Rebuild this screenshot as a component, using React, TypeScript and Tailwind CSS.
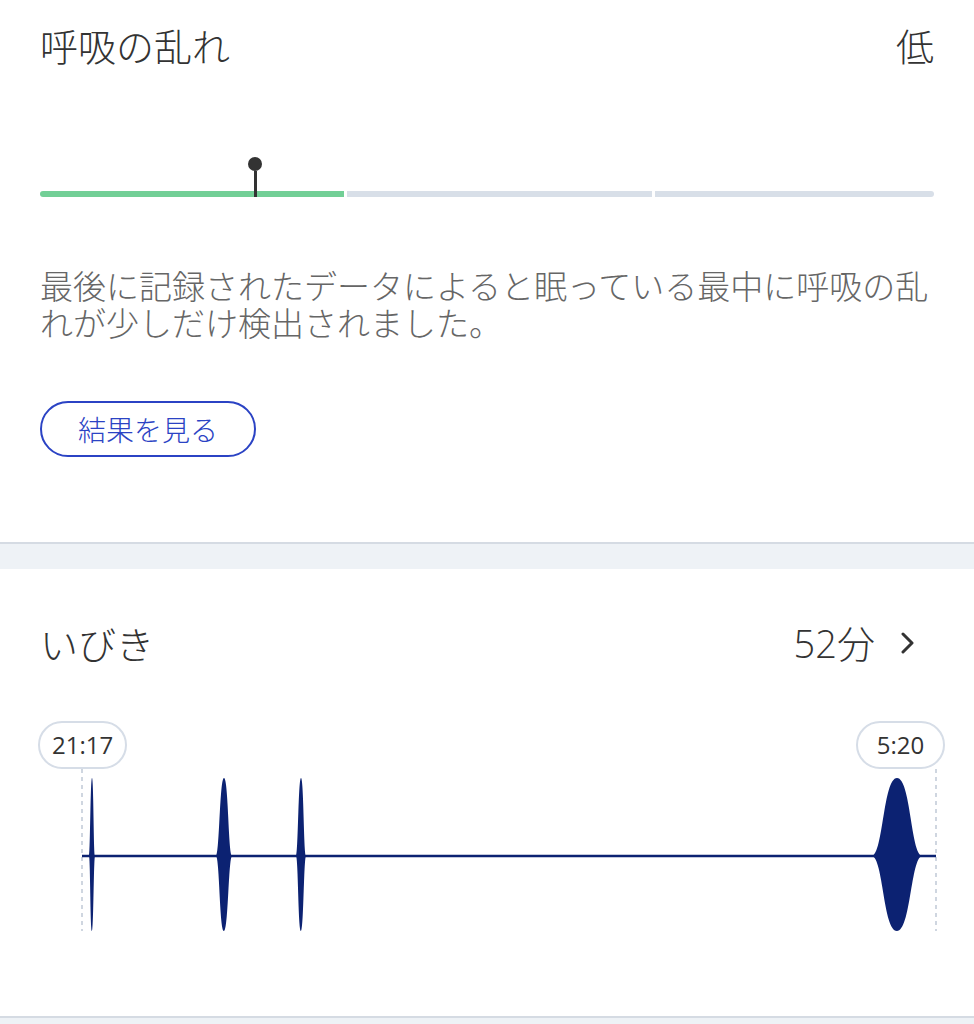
const BASE = 87;

// snoring bursts: centre x, half width
const bursts = [
  { x: 92, w: 3 },
  { x: 224, w: 8 },
  { x: 301, w: 5 },
  { x: 897, w: 25 },
];

function burstPath(cx: number, w: number) {
  const top = 9;
  const bottom = 162;
  return [
    `M ${cx - w} ${BASE}`,
    `C ${cx - w * 0.55} ${BASE - 2} ${cx - w * 0.55} ${top} ${cx} ${top}`,
    `C ${cx + w * 0.55} ${top} ${cx + w * 0.55} ${BASE - 2} ${cx + w} ${BASE}`,
    `C ${cx + w * 0.55} ${BASE + 2} ${cx + w * 0.55} ${bottom} ${cx} ${bottom}`,
    `C ${cx - w * 0.55} ${bottom} ${cx - w * 0.55} ${BASE + 2} ${cx - w} ${BASE}`,
    "Z",
  ].join(" ");
}

function TimePill({ label }: { label: string }) {
  return (
    <span className="flex h-[48px] min-w-[89px] items-center justify-center rounded-full border-2 border-[#d6dde7] px-[12px] font-['Open_Sans',sans-serif] text-[24px] font-normal text-[#333]">
      {label}
    </span>
  );
}

function SnoreChart() {
  return (
    <div>
      <div className="flex justify-between pl-[38px] pr-[29px]">
        <TimePill label="21:17" />
        <TimePill label="5:20" />
      </div>
      <svg width="974" height="172" viewBox="0 0 974 172" className="block">
        <line x1="82" y1="0" x2="82" y2="162" stroke="#cfd6e0" strokeWidth="2" strokeDasharray="4 4" />
        <line x1="936" y1="0" x2="936" y2="162" stroke="#cfd6e0" strokeWidth="2" strokeDasharray="4 4" />
        <line x1="82" y1={BASE} x2="936" y2={BASE} stroke="#0c2272" strokeWidth="2.5" />
        {bursts.map((b) => (
          <path key={b.x} d={burstPath(b.x, b.w)} fill="#0c2272" />
        ))}
      </svg>
    </div>
  );
}

export default function App() {
  return (
    <div className="min-h-[1024px] w-full bg-white font-['Noto_Sans_CJK_JP',sans-serif] font-light text-[#333]">
      <section className="px-10 pt-[24px] pb-[85px]">
        <div className="flex items-start justify-between text-[38px] leading-[42px]">
          <h2>呼吸の乱れ</h2>
          <span>低</span>
        </div>

        <div className="relative mt-[125px] flex h-[6px] gap-[3px]">
          <div className="w-[304px] rounded-l-full bg-[#72cf96]" />
          <div className="w-[305px] bg-[#d8dfe8]" />
          <div className="flex-1 rounded-r-full bg-[#d8dfe8]" />
          <div className="absolute bottom-0 left-[208px] flex flex-col items-center">
            <div className="h-[14px] w-[14px] rounded-full bg-[#333]" />
            <div className="h-[26px] w-[3px] bg-[#333]" />
          </div>
        </div>

        <p className="mt-[70px] text-[33px] leading-[37px] text-[#666]">
          最後に記録されたデータによると眠っている最中に呼吸の乱れが少しだけ検出されました。
        </p>

        <button className="mt-[60px] flex h-[56px] items-center rounded-full border-2 border-[#2b43c4] px-[36px] text-[28px] text-[#2b43c4]">
          結果を見る
        </button>
      </section>

      <div className="h-[27px] border-t-2 border-[#d5dbe3] bg-[#eef2f6]" />

      <section className="pt-[53px] pb-[75px]">
        <div className="flex items-center justify-between pl-10 pr-[59px] text-[38px] leading-[42px]">
          <h2>いびき</h2>
          <div className="flex items-center gap-[26px]">
            <span className="font-['Open_Sans','Noto_Sans_CJK_JP',sans-serif]">52分</span>
            <svg width="14" height="22" viewBox="0 0 14 22" className="text-[#333]">
              <polyline points="2,2 11,11 2,20" fill="none" stroke="currentColor" strokeWidth="3" strokeLinecap="round" strokeLinejoin="round" />
            </svg>
          </div>
        </div>
        <div className="mt-[57px]">
          <SnoreChart />
        </div>
      </section>

      <div className="h-[27px] border-t-2 border-[#d5dbe3] bg-[#eef2f6]" />
    </div>
  );
}
